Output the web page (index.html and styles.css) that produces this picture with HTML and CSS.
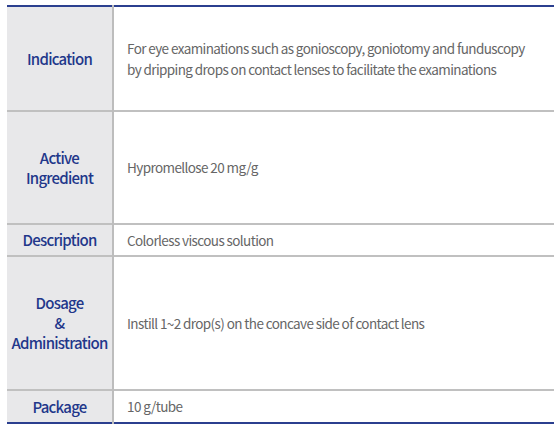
FILE: index.html
```html
<!DOCTYPE html>
<html>
<head>
<meta charset="utf-8">
<link rel="stylesheet" href="styles.css">
</head>
<body>
<table class="spec">
  <colgroup>
    <col class="c-label">
    <col class="c-value">
  </colgroup>
  <tr class="r1">
    <th>Indication</th>
    <td>For eye examinations such as gonioscopy, goniotomy and funduscopy<br>by dripping drops on contact lenses to facilitate the examinations</td>
  </tr>
  <tr class="r2">
    <th>Active<br>Ingredient</th>
    <td>Hypromellose 20 mg/g</td>
  </tr>
  <tr class="r3">
    <th>Description</th>
    <td>Colorless viscous solution</td>
  </tr>
  <tr class="r4">
    <th>Dosage<br>&amp;<br>Administration</th>
    <td>Instill 1~2 drop(s) on the concave side of contact lens</td>
  </tr>
  <tr class="r5">
    <th>Package</th>
    <td>10 g/tube</td>
  </tr>
</table>
</body>
</html>
```

FILE: styles.css
```css
html, body {
  margin: 0;
  padding: 0;
  background: #ffffff;
}
body {
  padding: 5px 6px 0 7px;
  font-family: "Noto Sans CJK KR", "Noto Sans", sans-serif;
}
.spec {
  width: 547px;
  table-layout: fixed;
  border-collapse: collapse;
  border-top: 2px solid #2b3f8f;
  border-bottom: 2px solid #2b3f8f;
}
.c-label { width: 106px; }
.spec th {
  padding: 0;
  background: #e8e8ea;
  color: #22378a;
  font-weight: 500;
  font-size: 15px;
  line-height: 20px;
  text-align: center;
  vertical-align: middle;
  border-right: 2px solid #bdbdbd;
  border-top: 2px solid #c0c0c0;
  letter-spacing: -0.75px;
  white-space: nowrap;
}
.spec td {
  padding: 0 0 0 13px;
  color: #666666;
  font-size: 13.5px;
  line-height: 21px;
  vertical-align: middle;
  border-top: 2px solid #c0c0c0;
  letter-spacing: -0.6px;
  white-space: nowrap;
}
.spec tr.r1 th, .spec tr.r1 td { border-top: none; }
.r1 { height: 105px; }
.r2 { height: 113px; }
.r3 { height: 32px; }
.r4 { height: 134px; }
.r5 { height: 33px; }
```
